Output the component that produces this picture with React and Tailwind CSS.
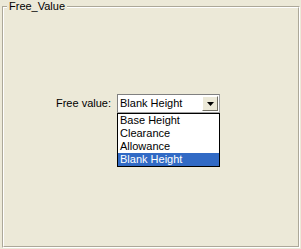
import { useState } from "react";

const items = ["Base Height", "Clearance", "Allowance", "Blank Height"];

export default function App() {
  const [value] = useState("Blank Height");

  return (
    <div
      className="relative w-[301px] h-[249px] bg-[#ece9d8] text-[11px] text-black leading-none overflow-hidden"
      style={{ fontFamily: '"Liberation Sans", Arial, sans-serif' }}
    >
      {/* etched group box */}
      <div className="ml-[2px] pt-[6px] w-[298px] h-[248px]">
        <div className="h-[242px] border border-t-[#aca899] border-l-[#aca899] border-r-white border-b-white">
          <div className="h-full border border-t-white border-l-white border-r-[#aca899] border-b-[#aca899] pt-[86px] pl-[49px]">
            <div className="flex items-center gap-[6px]">
              <div className="w-[58px] text-right">Free value:</div>
              <div className="relative">
                {/* combobox */}
                <div className="w-[103px] h-[19px] bg-white border border-t-[#808080] border-l-[#808080] border-r-[#a0a0a0] border-b-[#a0a0a0] flex items-center">
                  <div className="flex-1 pl-[2px]">{value}</div>
                  <div className="w-[16px] h-[15px] mr-[1px] bg-[#ece9d8] border border-t-white border-l-white border-r-[#716f64] border-b-[#716f64] flex items-center justify-center">
                    <svg width="7" height="4" viewBox="0 0 7 4">
                      <path d="M0 0h7L3.5 4z" fill="#000" />
                    </svg>
                  </div>
                </div>
                {/* dropdown list */}
                <div className="absolute left-0 top-[19px] w-[103px] bg-white border border-black">
                  {items.map((it) => (
                    <div
                      key={it}
                      className={
                        it === value
                          ? "h-[13px] pl-[2px] flex items-center bg-[#316ac5] text-white"
                          : "h-[13px] pl-[2px] flex items-center"
                      }
                    >
                      {it}
                    </div>
                  ))}
                </div>
              </div>
            </div>
          </div>
        </div>
      </div>
      {/* legend */}
      <div className="absolute left-[7px] top-0 px-[2px] h-[13px] flex items-center bg-[#ece9d8]">
        Free_Value
      </div>
    </div>
  );
}
